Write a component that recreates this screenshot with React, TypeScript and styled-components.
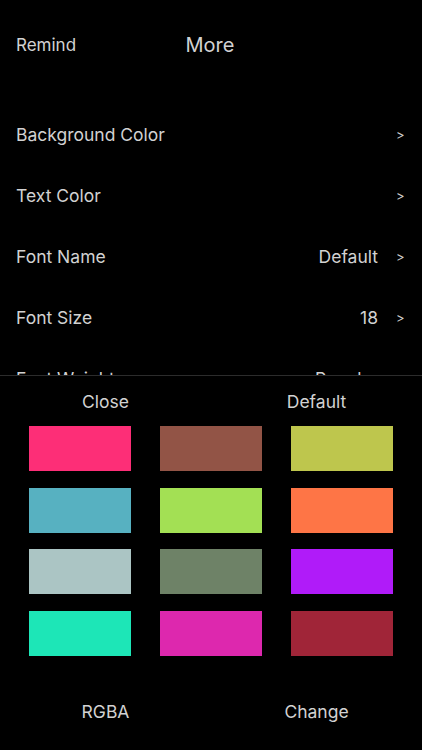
import React from "react";
import styled, { createGlobalStyle } from "styled-components";

const GlobalStyle = createGlobalStyle`
  html, body { margin: 0; padding: 0; background: #000; }
  body { font-family: Inter, "Liberation Sans", sans-serif; }
  * { box-sizing: border-box; }
`;

const Screen = styled.div`
  position: relative;
  width: 422px;
  height: 750px;
  background: #000;
  overflow: hidden;
  color: #d2d2d2;
`;

const Header = styled.div`
  position: relative;
  height: 90px;
  display: flex;
  align-items: center;
  padding: 0 16px;
`;

const HeaderButton = styled.span`
  font-size: 17px;
`;

const Title = styled.span`
  position: absolute;
  left: 0;
  right: 0;
  text-align: center;
  font-size: 20px;
  pointer-events: none;
  padding-right: 2px;
`;

const List = styled.div`
  padding-top: 14px;
  display: flex;
  flex-direction: column;
`;

const Row = styled.div`
  height: 61px;
  flex-shrink: 0;
  display: flex;
  align-items: center;
  padding: 0 16px;
  font-size: 17.5px;
`;

const Label = styled.span`
  flex: 1;
`;

const Value = styled.span`
  margin-right: 18px;
`;

const Chevron = styled.span`
  font-size: 13px;
  width: 8px;
  text-align: right;
  margin-right: 2px;
`;

const Sheet = styled.div`
  position: absolute;
  left: 0;
  right: 0;
  bottom: 0;
  height: 375px;
  background: #000;
  border-top: 1px solid #2c2c2c;
  display: flex;
  flex-direction: column;
`;

const ActionRow = styled.div<{ $offset?: number }>`
  display: flex;
  flex-shrink: 0;
  height: 50px;
  margin-top: ${(p) => p.$offset ?? 0}px;
  align-items: center;
`;

const Action = styled.span`
  flex: 1;
  text-align: center;
  font-size: 17.5px;
`;

const Grid = styled.div`
  display: grid;
  flex-shrink: 0;
  grid-template-columns: repeat(3, 102px);
  grid-auto-rows: 45px;
  column-gap: 29px;
  row-gap: 16.7px;
  padding: 0 29px;
`;

const Swatch = styled.div<{ $color: string }>`
  background: ${(p) => p.$color};
`;

const colors = [
  "#FD2E77",
  "#925446",
  "#BEC64D",
  "#57B1C1",
  "#A3E054",
  "#FE7546",
  "#ABC5C4",
  "#6E8267",
  "#B01BF9",
  "#1DE6B7",
  "#DD28AE",
  "#A02538",
];

const rows: { label: string; value?: string }[] = [
  { label: "Background Color" },
  { label: "Text Color" },
  { label: "Font Name", value: "Default" },
  { label: "Font Size", value: "18" },
  { label: "Font Weight", value: "Regular" },
];

export default function App() {
  return (
    <Screen>
      <GlobalStyle />
      <Header>
        <HeaderButton>Remind</HeaderButton>
        <Title>More</Title>
      </Header>
      <List>
        {rows.map((r) => (
          <Row key={r.label}>
            <Label>{r.label}</Label>
            {r.value && <Value>{r.value}</Value>}
            <Chevron>&gt;</Chevron>
          </Row>
        ))}
      </List>
      <Sheet>
        <ActionRow>
          <Action>Close</Action>
          <Action>Default</Action>
        </ActionRow>
        <Grid>
          {colors.map((c) => (
            <Swatch key={c} $color={c} />
          ))}
        </Grid>
        <ActionRow $offset={30}>
          <Action>RGBA</Action>
          <Action>Change</Action>
        </ActionRow>
      </Sheet>
    </Screen>
  );
}
